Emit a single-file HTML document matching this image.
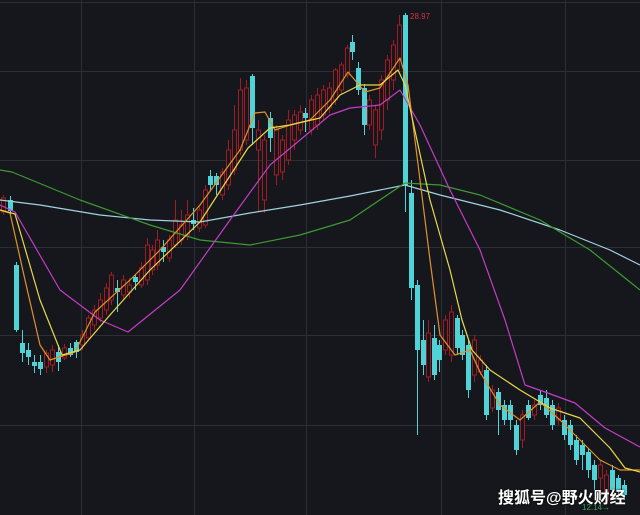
<!DOCTYPE html>
<html><head><meta charset="utf-8"><style>
html,body{margin:0;padding:0;background:#16171d;width:640px;height:515px;overflow:hidden}
svg{display:block}
.wm{position:absolute;left:498px;top:484px;color:#fff;font:bold 16px "Liberation Sans","Noto Sans CJK SC",sans-serif;white-space:nowrap;text-shadow:0 0 2px #000}
</style></head><body>
<svg id="s" width="640" height="515" viewBox="0 0 640 515">
<rect width="640" height="515" fill="#16171d"/>
<g stroke="#2c2e35" stroke-width="1">
<line x1="0" y1="2.5" x2="640" y2="2.5"/>
<line x1="0" y1="71.5" x2="640" y2="71.5"/>
<line x1="0" y1="160.5" x2="640" y2="160.5"/>
<line x1="0" y1="247.5" x2="640" y2="247.5"/>
<line x1="0" y1="335.5" x2="640" y2="335.5"/>
<line x1="0" y1="425.5" x2="640" y2="425.5"/>
<line x1="81.5" y1="0" x2="81.5" y2="515"/>
<line x1="194.5" y1="0" x2="194.5" y2="515"/>
<line x1="306.5" y1="0" x2="306.5" y2="515"/>
<line x1="441.5" y1="0" x2="441.5" y2="515"/>
<line x1="565.5" y1="0" x2="565.5" y2="515"/>
</g>
<g id="c"></g>
<g fill="none" stroke-width="1.2" stroke-linejoin="round">
<polyline stroke="#9fd3e0" points="0,200 40,205 100,215 150,220 200,222 250,213 300,205 350,196 405,185 440,195 500,210 560,230 610,250 640,265"/>
<polyline stroke="#3c9a32" points="0,170 12,172 80,200 150,225 200,240 250,245 300,235 350,220 405,183 440,185 480,195 540,220 590,250 640,290"/>
<polyline stroke="#c43cc4" points="0,205 15,212 60,290 100,320 128,332 180,290 230,220 270,165 300,140 330,115 350,108 380,105 400,90 420,125 450,190 480,250 505,320 525,385 545,392 575,403 605,428 640,447"/>
<polyline stroke="#e0902a" points="0,210 10,213 25,280 40,345 50,360 75,352 95,312 130,280 160,250 200,205 240,150 255,113 265,112 275,130 290,125 310,120 330,100 348,72 365,92 380,88 400,58 408,85 420,180 430,260 440,335 455,355 470,350 480,372 500,405 520,420 540,402 560,420 580,440 600,460 620,470 640,470"/>
<polyline stroke="#e8d84a" points="0,210 15,214 40,300 62,355 80,350 110,315 150,270 200,222 248,148 270,128 290,125 320,118 340,95 360,85 380,85 398,70 405,85 430,200 450,270 462,320 472,350 490,370 520,390 550,408 580,418 610,448 625,468 640,472"/>
</g>
<text x="410" y="19" fill="#d8323a" font-family="Liberation Sans,sans-serif" font-size="8">28.97</text>
<text x="582" y="510" fill="#3aa55a" font-family="Liberation Sans,sans-serif" font-size="8">12.14→</text>
</svg>
<div class="wm">搜狐号@野火财经</div>
<script>
var C=[
[3,198,212,195,215,'r'],[10,200,211,196,214,'c'],[16,265,330,262,332,'c'],[22,343,353,330,362,'c'],[28,350,357,343,365,'c'],[34,362,366,355,373,'c'],[40,362,369,355,375,'c'],
[46,353,367,350,373,'r'],[52,350,365,345,372,'r'],[58,352,362,345,371,'c'],[64,348,358,344,360,'r'],[70,348,355,343,357,'c'],[76,342,352,340,358,'c'],
[82,335,345,330,350,'r'],[88,318,338,315,340,'r'],[94,310,325,305,330,'r'],[100,300,318,293,322,'r'],[106,288,310,283,315,'r'],[111,275,300,272,305,'r'],[117,288,292,280,312,'c'],
[123,280,295,275,300,'r'],[129,285,292,278,298,'r'],[135,277,282,275,290,'c'],[141,268,285,262,288,'r'],[147,245,280,238,285,'r'],[152,250,270,245,275,'r'],[157,240,265,230,270,'r'],
[163,247,252,240,262,'c'],[169,240,258,235,262,'r'],[175,220,245,200,248,'r'],[181,225,240,210,245,'r'],[187,215,235,200,240,'r'],[193,220,224,208,230,'c'],[199,210,228,205,232,'r'],
[205,190,225,185,228,'r'],[210,176,185,170,190,'c'],[216,176,185,173,195,'c'],[222,172,195,168,200,'r'],[228,150,185,140,190,'r'],[234,130,170,105,175,'r'],[240,90,150,78,155,'r'],
[246,88,140,80,145,'r'],[252,76,128,74,145,'c'],[258,130,150,120,212,'r'],[264,140,200,135,213,'r'],[270,118,138,112,152,'c'],[276,130,175,125,185,'r'],[282,140,172,135,180,'r'],
[288,120,160,110,165,'r'],[294,115,140,110,150,'r'],[300,112,130,105,135,'r'],[305,113,118,108,132,'c'],[311,100,130,95,135,'r'],[317,95,125,88,130,'r'],[323,90,115,85,120,'r'],
[329,88,108,82,113,'r'],[335,70,100,68,105,'r'],[341,65,90,62,95,'r'],[347,48,75,45,78,'r'],[352,42,52,35,60,'c'],[358,68,90,62,95,'c'],[364,88,125,84,135,'c'],[369,100,125,95,130,'r'],
[375,110,145,105,158,'r'],[381,80,130,75,140,'r'],[387,60,100,55,110,'r'],[393,45,80,40,90,'r'],[399,25,60,15,70,'r'],[405,15,185,13,212,'c'],[411,193,288,180,300,'c'],
[417,285,350,280,435,'c'],[423,340,365,320,375,'c'],[428,333,377,320,382,'r'],[434,338,375,325,380,'c'],[439,345,360,340,372,'c'],[445,320,350,315,355,'r'],[451,312,355,305,362,'r'],
[457,318,348,315,355,'c'],[462,335,355,330,360,'c'],[468,345,390,340,398,'c'],[474,340,375,335,382,'r'],[480,360,372,355,375,'r'],[486,370,415,365,420,'c'],[492,390,408,385,412,'r'],
[498,392,410,388,435,'c'],[504,405,420,400,425,'c'],[510,405,420,400,430,'c'],[516,425,450,420,455,'c'],[522,415,440,410,448,'r'],[528,405,418,400,420,'c'],[534,405,415,400,420,'r'],
[540,395,405,390,410,'c'],[546,398,415,390,418,'c'],[552,405,425,400,430,'c'],[558,408,420,403,425,'r'],[564,420,435,415,440,'c'],[570,425,445,420,450,'c'],[576,440,460,435,465,'c'],
[582,445,455,440,470,'c'],[588,452,470,448,478,'c'],[594,465,480,460,490,'c'],[600,465,478,460,495,'r'],[606,475,500,470,505,'r'],[612,470,490,465,495,'c'],[618,478,490,475,500,'c'],[624,485,495,480,500,'c']
];
var g=document.getElementById('c'),h='';
C.forEach(function(d){var x=d[0],cy=d[5]=='c',col=cy?'#4fd3d6':'#a01c22';
h+='<line x1="'+(x+0.5)+'" y1="'+d[3]+'" x2="'+(x+0.5)+'" y2="'+d[4]+'" stroke="'+col+'" stroke-width="1"/>';
if(cy)h+='<rect x="'+(x-2)+'" y="'+d[1]+'" width="5" height="'+Math.max(2,d[2]-d[1])+'" fill="'+col+'"/>';
else h+='<rect x="'+(x-1.5)+'" y="'+d[1]+'" width="4" height="'+Math.max(2,d[2]-d[1])+'" fill="#16171d" stroke="'+col+'" stroke-width="1"/>';});
g.innerHTML=h;
</script>
</body></html>
